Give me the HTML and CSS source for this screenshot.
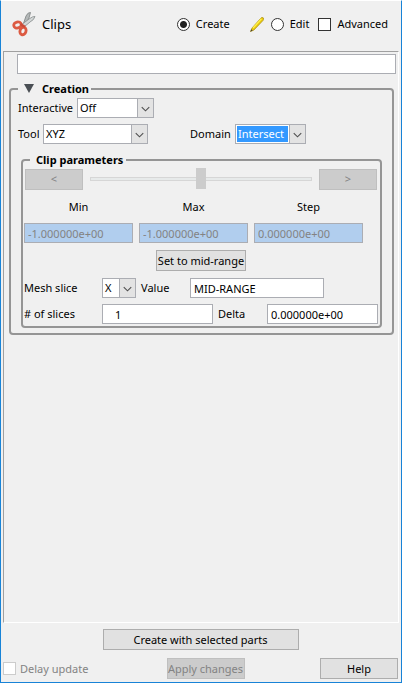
FILE: index.html
```html
<!DOCTYPE html>
<html lang="en">
	<head>
		<meta charset="UTF-8">
		<meta name="viewport" content="width=device-width, initial-scale=1.0">
		<title>Clips</title>
		<link rel="stylesheet" href="styles.css">
	</head>
	<body>
	<form class="panel">
		<header class="header">
			<svg class="scissors" viewBox="0 0 24 26" aria-hidden="true">
				<path d="M11 14 L14 5 Q16 1 18.500 1.500 L17 7 L13 15 Z" fill="#b4b8b8" stroke="#7c8282" stroke-width=".8"/>
				<path d="M9 14 L17 8 Q21 5 23 5.500 Q22 9 18 11 L12 16 Z" fill="#d3d7d7" stroke="#858b8b" stroke-width=".8"/>
				<ellipse cx="5.500" cy="14" rx="3.800" ry="3" transform="rotate(-12 5.500 14)" fill="none" stroke="#dc5a42" stroke-width="2.800"/>
				<ellipse cx="11" cy="20" rx="3" ry="3.800" transform="rotate(20 11 20)" fill="none" stroke="#dc5a42" stroke-width="2.800"/>
				<path d="M8.500 13 L13 16" stroke="#c94b38" stroke-width="2.500"/>
			</svg>
			<h1 class="title">Clips</h1>
			<input class="radio" type="radio" id="create" name="mode" checked>
			<label class="create-label" for="create">Create</label>
			<svg class="pencil" viewBox="0 0 14 15" aria-hidden="true">
				<path d="M.5 14.500 L2 11 L10.500 1.500 Q12 -.5 13.500 1 Q14 2.500 13 3.500 L4 13 Z" fill="#e8c80c" stroke="#a78d1c" stroke-width=".7"/>
				<path d="M3 11 L11.500 1.800" stroke="#fff04a" stroke-width="1.300"/>
				<path d="M.3 14.700 L1.300 12.300 L2.700 13.500 Z" fill="#4c432a"/>
			</svg>
			<input class="radio" type="radio" id="edit" name="mode">
			<label class="edit-label" for="edit">Edit</label>
			<input class="check" type="checkbox" id="advanced">
			<label for="advanced">Advanced</label>
		</header>

		<main class="scroll">
			<input class="field description" type="text" aria-label="Description">
			<fieldset class="group creation">
				<legend><svg class="triangle" viewBox="0 0 10 9" aria-hidden="true"><path d="M0 0 H10 L5 9 Z" fill="#4a4f54"/></svg>Creation</legend>
				<div class="row">
					<label class="interactive-label" for="interactive">Interactive</label>
					<span class="combo interactive">
						<select id="interactive"><option>Off</option></select>
						<svg viewBox="0 0 16 18" aria-hidden="true"><path d="M4 8 L8 12 L12 8"/></svg>
					</span>
				</div>
				<div class="row">
					<label class="tool-label" for="tool">Tool</label>
					<span class="combo tool">
						<select id="tool"><option>XYZ</option></select>
						<svg viewBox="0 0 16 18" aria-hidden="true"><path d="M4 8 L8 12 L12 8"/></svg>
					</span>
					<label class="domain-label" for="domain">Domain</label>
					<span class="combo domain">
						<select id="domain"><option>Intersect</option></select>
						<svg viewBox="0 0 16 18" aria-hidden="true"><path d="M4 8 L8 12 L12 8"/></svg>
					</span>
				</div>

				<fieldset class="group params">
					<legend>Clip parameters</legend>
					<div class="stepper">
						<button class="button step-button" type="button" disabled>&lt;</button>
						<input class="slider" type="range" min="0" max="100" value="50" aria-label="Position" disabled>
						<button class="button step-button" type="button" disabled>&gt;</button>
					</div>
					<div class="ranges">
						<label for="min">Min</label>
						<label for="max">Max</label>
						<label for="step">Step</label>
						<input class="field" type="text" id="min" value="-1.000000e+00" disabled>
						<input class="field" type="text" id="max" value="-1.000000e+00" disabled>
						<input class="field" type="text" id="step" value="0.000000e+00" disabled>
					</div>
					<button class="button mid-range" type="button">Set to mid-range</button>
					<div class="row">
						<label class="slice-label" for="mesh">Mesh slice</label>
						<span class="combo mesh">
							<select id="mesh"><option>X</option></select>
							<svg viewBox="0 0 16 18" aria-hidden="true"><path d="M4 8 L8 12 L12 8"/></svg>
						</span>
						<label class="value-label" for="value">Value</label>
						<input class="field value" type="text" id="value" value="MID-RANGE">
					</div>
					<div class="row">
						<label class="slice-label" for="slices"># of slices</label>
						<input class="field slices" type="text" id="slices" value="1">
						<label class="value-label" for="delta">Delta</label>
						<input class="field delta" type="text" id="delta" value="0.000000e+00">
					</div>
				</fieldset>
			</fieldset>
		</main>

		<footer class="footer">
			<button class="button create-parts" type="button">Create with selected parts</button>
			<div class="actions">
				<span class="delay">
					<input class="check" type="checkbox" id="delay" disabled>
					<label for="delay">Delay update</label>
				</span>
				<button class="button action" type="button" disabled>Apply changes</button>
				<button class="button action" type="button">Help</button>
			</div>
		</footer>
	</form>
	</body>
</html>
```
FILE: styles.css
```css
* {
	box-sizing: border-box;
}
body {
	margin: 0;
	background: #f0f0f0;
	color: #000;
	font-family: "Noto Sans", Tahoma, sans-serif;
	font-size: 11px;
	line-height: 16px;
}
input, select, button {
	margin: 0;
	font: inherit;
	color: inherit;
}
label, button {
	white-space: nowrap;
}
.panel {
	display: flex;
	flex-direction: column;
	min-height: 100vh;
	border: 1px solid #1883d7;
	border-top-color: #fff;
}
.header {
	display: flex;
	align-items: center;
	height: 50px;
	padding: 0 13px 4px 11px;
}
.scissors {
	width: 24px;
	height: 26px;
	flex: none;
}
.title {
	flex: 1;
	margin: 0 0 0 6px;
	font-size: 13px;
	font-weight: 400;
}
.radio, .check {
	appearance: none;
	flex: none;
	width: 13px;
	height: 13px;
	margin-right: 6px;
	border: 1px solid #333;
	background: #fff;
}
.radio {
	border-radius: 50%;
}
.radio:checked {
	background: radial-gradient(circle, #222 3px, #fff 4px);
}
.check:disabled {
	margin-right: 4px;
	border-color: #ccc;
}
.check:disabled + label {
	color: #838383;
}
.create-label {
	margin-right: 20px;
}
.edit-label {
	margin-right: 9px;
}
.pencil {
	width: 14px;
	height: 15px;
	margin-right: 7px;
}
.scroll {
	flex: 1;
	margin: 0 2px;
	padding: 2px 4px 0 5px;
	border: 1px solid #a0a0a0;
	border-right-color: #fff;
	border-bottom-color: #fff;
}
.field {
	min-width: 0;
	height: 20px;
	padding: 1px 3px 0;
	border: 1px solid #abadb3;
	background: #fff;
	outline: 0;
}
.field:disabled {
	background: #b1ceee;
	color: #838383;
}
.description {
	display: block;
	width: calc(100% - 6px);
	margin-left: 8px;
}
.group {
	min-width: 0;
	margin: 0;
	border: 2px solid #959595;
	border-radius: 4px;
}
.group legend {
	font-weight: 700;
	line-height: 14px;
}
.creation {
	margin-top: 8px;
	padding: 2px 10px 5px;
}
.creation > legend {
	margin-left: -3px;
	padding: 0 2px 0 6px;
}
.triangle {
	width: 10px;
	height: 9px;
	margin-right: 8px;
}
.row {
	display: flex;
	align-items: center;
	margin-bottom: 6px;
}
.creation > .row {
	margin-left: -3px;
}
.combo {
	position: relative;
	flex: none;
	height: 20px;
}
.combo select {
	appearance: none;
	display: block;
	width: 100%;
	height: 20px;
	padding: 1px 17px 1px 1px;
	border: 1px solid #abadb3;
	border-radius: 0;
	background: #fff;
	outline: 0;
	text-indent: 1px;
}
.combo svg {
	position: absolute;
	top: 0;
	right: 0;
	width: 17px;
	height: 20px;
	border: 1px solid #abadb3;
	background: #e3e3e3;
	pointer-events: none;
}
.combo path {
	fill: none;
	stroke: #505050;
	stroke-width: 1.2;
}
.interactive-label {
	width: 59px;
}
.interactive {
	width: 77px;
}
.tool-label {
	width: 25px;
}
.tool {
	width: 105px;
}
.domain-label {
	width: 45px;
	margin-left: 42px;
}
.domain {
	width: 71px;
}
.domain select {
	background: linear-gradient(#3399ff, #3399ff) content-box, #fff;
	color: #fff;
}
.params {
	margin-top: 9px;
	padding: 1px 2px 2px 1px;
}
.params > legend {
	margin-left: 6px;
	padding: 0 3px 0 6px;
}
.stepper {
	display: flex;
	align-items: center;
	gap: 7px;
	padding: 0 1px;
}
.button {
	height: 21px;
	padding: 0;
	border: 1px solid #adadad;
	background: #e1e1e1;
}
.button:disabled {
	border-color: #bfbfbf;
	background: #ccc;
	color: #838383;
}
.step-button {
	flex: none;
	width: 58px;
}
.slider {
	appearance: none;
	flex: 1;
	min-width: 0;
	height: 22px;
	background: none;
}
.slider::-webkit-slider-runnable-track {
	height: 4px;
	border: 1px solid #d6d6d6;
	background: #e7eaea;
}
.slider::-webkit-slider-thumb {
	appearance: none;
	width: 10px;
	height: 21px;
	margin-top: -10px;
	background: #ccc;
}
.ranges {
	display: grid;
	grid-template-columns: repeat(3, 1fr);
	gap: 8px 6px;
	margin: 9px 15px 7px 0;
}
.ranges label {
	text-align: center;
}
.mid-range {
	display: block;
	width: 90px;
	margin: 0 auto 7px;
}
.slice-label {
	width: 78px;
}
.mesh {
	width: 34px;
}
.value-label {
	width: 49px;
	margin-left: 5px;
}
.value {
	width: 134px;
}
.slices {
	flex: 1;
	padding-left: 12px;
}
.delta {
	flex: none;
	width: 111px;
}
.params .row:last-child {
	margin-bottom: 0;
}
.footer {
	padding: 6px 3px 3px 2px;
}
.create-parts {
	display: block;
	width: 196px;
	margin: 0 auto 8px;
}
.actions {
	display: flex;
	align-items: center;
	justify-content: space-between;
}
.delay {
	display: flex;
	flex: none;
	align-items: center;
	width: 88px;
}
.action {
	width: 78px;
}
```
